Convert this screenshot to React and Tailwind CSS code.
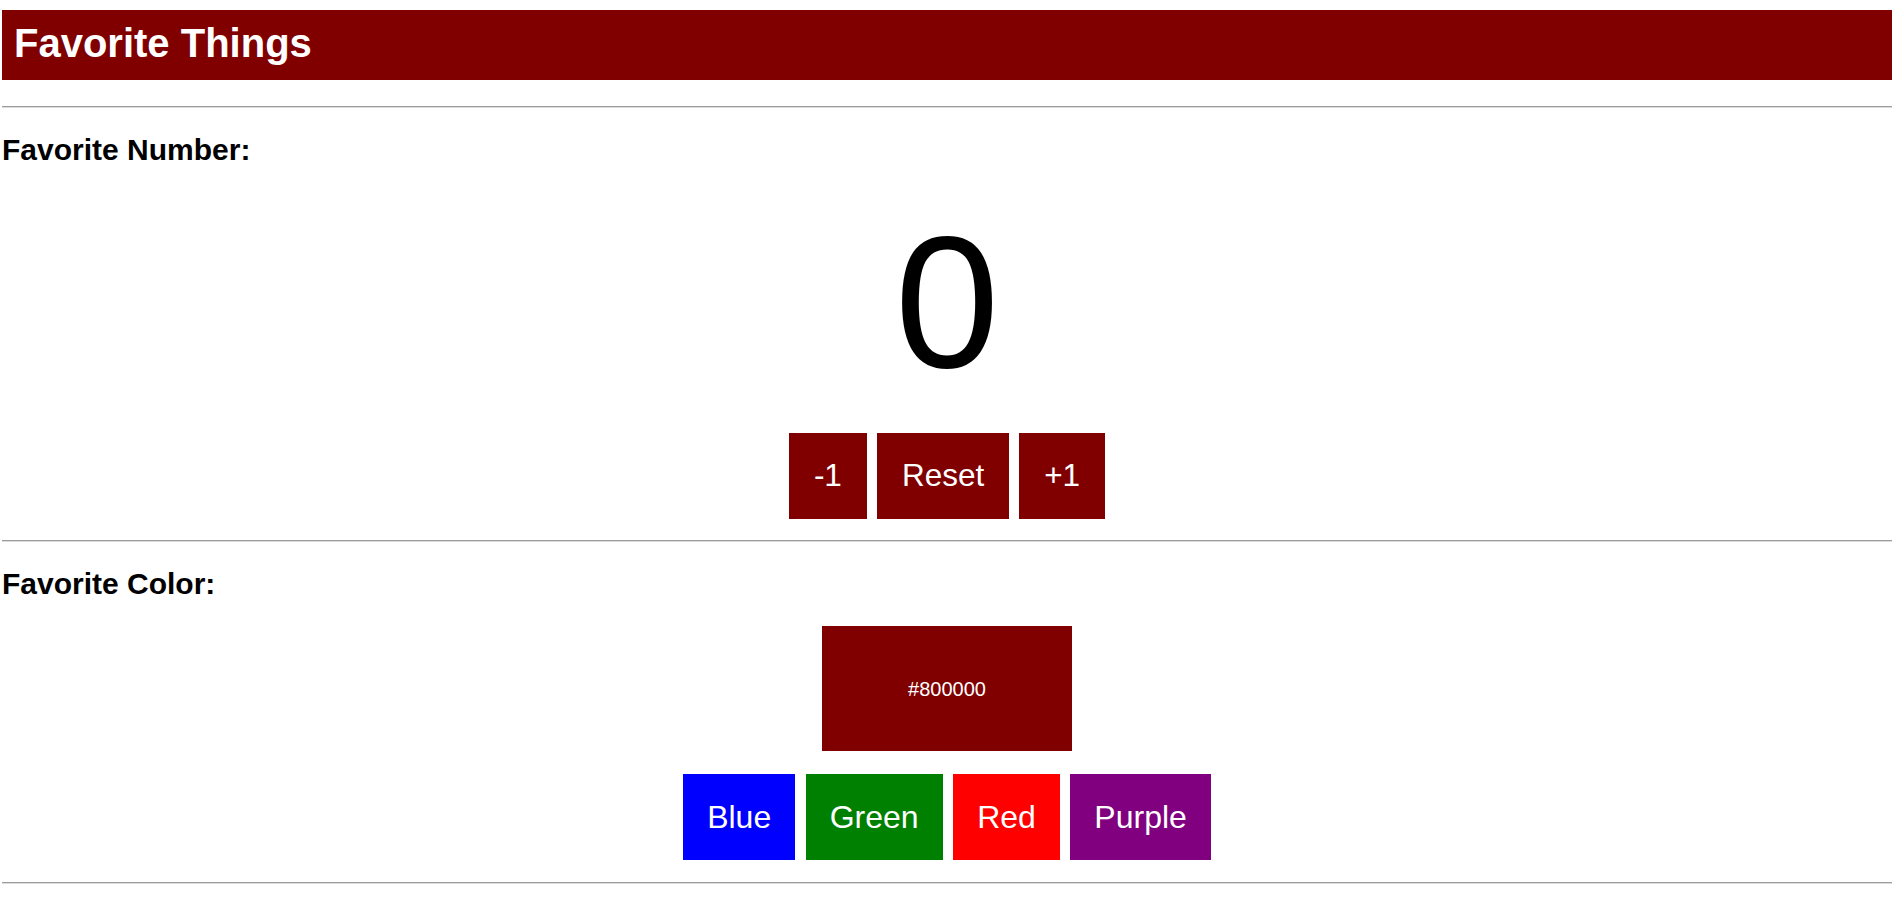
import React, { useState } from 'react';

const COLORS = [
  { name: 'Blue', hex: '#0000ff', cls: 'bg-[#0000ff]' },
  { name: 'Green', hex: '#008000', cls: 'bg-[#008000]' },
  { name: 'Red', hex: '#ff0000', cls: 'bg-[#ff0000]' },
  { name: 'Purple', hex: '#800080', cls: 'bg-[#800080]' },
];

const Rule = ({ className = '' }) => (
  <div className={`border-t border-b border-t-[#9c9c9c] border-b-[#dcdcdc] ${className}`} />
);

const App = () => {
  const [count, setCount] = useState(0);
  const [color, setColor] = useState('#800000');

  return (
    <div className="min-h-screen bg-white px-[2px] pt-[10px] font-['Liberation_Sans',Arial,sans-serif] text-black">
      {/* Header */}
      <header className="h-[70px] bg-[#800000] pl-[12px] pt-[10px]">
        <h1 className="text-[40px] font-bold leading-[1.15] text-white">Favorite Things</h1>
      </header>

      <Rule className="mt-[26px]" />

      {/* Number */}
      <section>
        <h2 className="mt-[25px] text-[30px] font-bold leading-[1.15]">Favorite Number:</h2>
        <div className="mt-[40px] text-center text-[188px] leading-none">{count}</div>
        <div className="mt-[37px] flex justify-center gap-[10px]">
          <button
            onClick={() => setCount(count - 1)}
            className="h-[86px] bg-[#800000] px-[25px] text-[31.5px] leading-[1.15] text-white"
          >
            -1
          </button>
          <button
            onClick={() => setCount(0)}
            className="h-[86px] bg-[#800000] px-[25px] text-[31.5px] leading-[1.15] text-white"
          >
            Reset
          </button>
          <button
            onClick={() => setCount(count + 1)}
            className="h-[86px] bg-[#800000] px-[25px] text-[31.5px] leading-[1.15] text-white"
          >
            +1
          </button>
        </div>
      </section>

      <Rule className="mt-[21px]" />

      {/* Color */}
      <section>
        <h2 className="mt-[25px] text-[30px] font-bold leading-[1.15]">Favorite Color:</h2>
        <div className="mt-[25px] flex justify-center">
          <div
            className="flex h-[125px] w-[250px] items-center justify-center text-[20px] text-white"
            style={{ backgroundColor: color }}
          >
            {color}
          </div>
        </div>
        <div className="mt-[23px] flex justify-center gap-[10.5px]">
          {COLORS.map((c) => (
            <button
              key={c.name}
              onClick={() => setColor(c.hex)}
              className={`h-[86px] px-[24px] text-[32px] leading-[1.15] text-white ${c.cls}`}
            >
              {c.name}
            </button>
          ))}
        </div>
      </section>

      <Rule className="mt-[22px]" />
    </div>
  );
};

export default App;
